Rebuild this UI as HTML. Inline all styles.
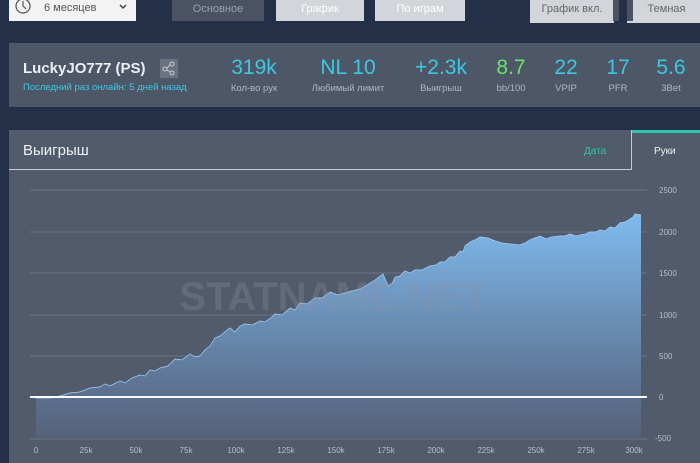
<!DOCTYPE html><html><head><meta charset="utf-8"><style>
*{margin:0;padding:0;box-sizing:border-box}
body{width:700px;height:463px;overflow:hidden;background:#233047;font-family:"Liberation Sans",sans-serif;position:relative}
.a{position:absolute}
.btn{position:absolute;top:0;height:21px;font-size:11px;text-align:center;line-height:19px}
.v{position:absolute;top:56px;font-size:21px;color:#3cc8e0;text-align:center;transform:translateX(-50%);white-space:nowrap}
.l{position:absolute;top:83px;font-size:9.5px;color:#b0b6c0;transform:translateX(-50%);white-space:nowrap}
</style></head><body>
<div class="a" style="left:9px;top:0;width:127px;height:21px;background:#f3f3f3"></div>
<svg class="a" style="left:14px;top:-3px" width="18" height="18"><circle cx="9" cy="9" r="7" fill="none" stroke="#555" stroke-width="1.2"/><path d="M9 4V9L12 12" fill="none" stroke="#555" stroke-width="1.2"/></svg>
<div class="a" style="left:44px;top:2px;font-size:11px;color:#555">6 месяцев</div>
<svg class="a" style="left:119px;top:4px" width="8" height="6"><path d="M1 1L4 4L7 1" fill="none" stroke="#444" stroke-width="1.5"/></svg>
<div class="btn" style="left:172px;width:92px;background:#4a5264;color:#9aa0aa">Основное</div>
<div class="btn" style="left:276px;width:88px;background:#d2d5da;color:#fff">График</div>
<div class="btn" style="left:375px;width:90px;background:#d2d5da;color:#fff">По играм</div>
<div class="btn" style="left:530px;width:84px;height:23px;background:#d2d5da;color:#666">График вкл.</div>
<div class="a" style="left:613px;top:0;width:6px;height:21px;background:#4a5264"></div>
<div class="btn" style="left:627px;width:73px;height:23px;background:#d2d5da;color:#666;padding-left:6px">Темная</div>
<div class="a" style="left:627px;top:0;width:6px;height:21px;background:#4a5264"></div>

<div class="a" style="left:9px;top:43px;width:691px;height:64px;background:#4e5768"></div>
<div class="a" style="left:23px;top:60px;font-size:15px;font-weight:bold;color:#eef0f3">LuckyJO777 (PS)</div>
<div class="a" style="left:160px;top:59px;width:18px;height:19px;background:#6a7281"></div>
<svg class="a" style="left:160px;top:59px" width="18" height="19"><circle cx="12" cy="5" r="2" fill="none" stroke="#ccc"/><circle cx="5" cy="10" r="2" fill="none" stroke="#ccc"/><circle cx="12" cy="14" r="2" fill="none" stroke="#ccc"/><path d="M7 9L10 6M7 11L10 13" stroke="#ccc"/></svg>
<div class="a" style="left:23px;top:82px;font-size:9.5px;color:#3cc8e0">Последний раз онлайн: 5 дней назад</div>
<div class="v" style="left:254px">319k</div><div class="l" style="left:254px">Кол-во рук</div>
<div class="v" style="left:348px">NL 10</div><div class="l" style="left:348px">Любимый лимит</div>
<div class="v" style="left:441px">+2.3k</div><div class="l" style="left:441px">Выигрыш</div>
<div class="v" style="left:511px;color:#6ee06a">8.7</div><div class="l" style="left:511px">bb/100</div>
<div class="v" style="left:566px">22</div><div class="l" style="left:566px">VPIP</div>
<div class="v" style="left:618px">17</div><div class="l" style="left:618px">PFR</div>
<div class="v" style="left:671px">5.6</div><div class="l" style="left:671px">3Bet</div>

<div class="a" style="left:9px;top:130px;width:691px;height:333px;background:#525b6b"></div>
<div class="a" style="left:9px;top:169px;width:623px;height:1px;background:#c8ccd2"></div>
<div class="a" style="left:631px;top:130px;width:1px;height:40px;background:#c8ccd2"></div>
<div class="a" style="left:632px;top:130px;width:68px;height:3px;background:#2cc6a8"></div>
<div class="a" style="left:23px;top:142px;font-size:15px;color:#eef0f3">Выигрыш</div>
<div class="a" style="left:584px;top:146px;font-size:10px;color:#2cc6a8">Дата</div>
<div class="a" style="left:654px;top:146px;font-size:10px;color:#eef0f3">Руки</div>

<svg class="a" style="left:0;top:0" width="700" height="463">
<defs><linearGradient id="g" x1="0" y1="0" x2="0" y2="1"><stop offset="0" stop-color="#80bbef"/><stop offset="0.75" stop-color="#5e7595"/><stop offset="1" stop-color="#56627a"/></linearGradient></defs>
<g stroke="#6c7585" stroke-width="1"><line x1="30" y1="190" x2="647" y2="190"/><line x1="30" y1="232" x2="647" y2="232"/><line x1="30" y1="273" x2="647" y2="273"/><line x1="30" y1="315" x2="647" y2="315"/><line x1="30" y1="356" x2="647" y2="356"/><line x1="30" y1="439" x2="647" y2="439"/></g>
<path id="c" d="M36 398L50 398L60 396L70 393L80 392L90 388L100 387L105 384L110 386L120 381L125 383L132 378L140 375L145 376L150 370L155 371L160 368L168 366L175 359L182 360L190 354L195 357L200 356L205 350L210 346L215 338L220 336L226 331L230 328L235 332L240 326L245 324L252 325L260 321L265 322L272 317L275 314L282 315L290 308L295 310L300 303L307 304L315 298L322 298L330 292L338 295L345 293L352 291L360 289L367 285L375 280L383 274L388 286L392 284L395 277L400 276L405 271L410 273L415 270L422 270L430 266L436 265L440 262L445 262L450 257L455 257L460 251L463 252L465 246L470 242L475 240L480 237L488 238L495 241L502 243L510 244L520 245L525 243L530 240L535 238L540 236L546 239L552 237L560 236L565 236L570 234L576 236L580 235L586 234L590 232L596 232L600 230L605 231L610 227L615 228L620 223L625 222L630 219L633 217L635 214L641 215" fill="none" stroke="#9ccaf2" stroke-width="0.7"/>
<path d="M36 398L50 398L60 396L70 393L80 392L90 388L100 387L105 384L110 386L120 381L125 383L132 378L140 375L145 376L150 370L155 371L160 368L168 366L175 359L182 360L190 354L195 357L200 356L205 350L210 346L215 338L220 336L226 331L230 328L235 332L240 326L245 324L252 325L260 321L265 322L272 317L275 314L282 315L290 308L295 310L300 303L307 304L315 298L322 298L330 292L338 295L345 293L352 291L360 289L367 285L375 280L383 274L388 286L392 284L395 277L400 276L405 271L410 273L415 270L422 270L430 266L436 265L440 262L445 262L450 257L455 257L460 251L463 252L465 246L470 242L475 240L480 237L488 238L495 241L502 243L510 244L520 245L525 243L530 240L535 238L540 236L546 239L552 237L560 236L565 236L570 234L576 236L580 235L586 234L590 232L596 232L600 230L605 231L610 227L615 228L620 223L625 222L630 219L633 217L635 214L641 215L641 437L36 437Z" fill="url(#g)"/>
<use href="#c"/>
<text x="333" y="310" font-family="Liberation Sans" font-weight="bold" font-size="40" fill="#8a93a2" fill-opacity="0.3" text-anchor="middle">STATNAME.NET</text>
<line x1="30" y1="397" x2="647" y2="397" stroke="#fff" stroke-width="2"/>
<g font-family="Liberation Sans" font-size="8" fill="#b8bec8"><text x="659" y="193">2500</text><text x="659" y="235">2000</text><text x="659" y="276">1500</text><text x="659" y="318">1000</text><text x="659" y="359">500</text><text x="659" y="400">0</text><text x="655" y="441">-500</text></g>
<g font-family="Liberation Sans" font-size="8" fill="#b8bec8" text-anchor="middle"><text x="36" y="453">0</text><text x="86" y="453">25k</text><text x="136" y="453">50k</text><text x="186" y="453">75k</text><text x="236" y="453">100k</text><text x="286" y="453">125k</text><text x="336" y="453">150k</text><text x="386" y="453">175k</text><text x="436" y="453">200k</text><text x="486" y="453">225k</text><text x="536" y="453">250k</text><text x="586" y="453">275k</text><text x="634" y="453">300k</text></g>
</svg>
</body></html>
